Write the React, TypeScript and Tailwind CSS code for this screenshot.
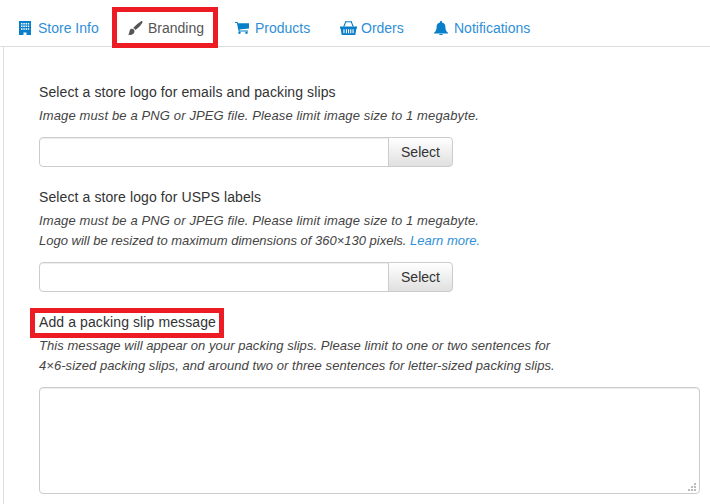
import type { ReactNode } from "react";

function BuildingIcon() {
  return (
    <svg width="12" height="14" viewBox="0 0 12 14" className="fill-[#0a7fc9]">
      <path
        fillRule="evenodd"
        d="M0 0h12v14H7.5v-2.5h-3V14H0zM2 2v1.5h1.5V2zM4.3 2v1.5h1.5V2zM6.6 2v1.5h1.5V2zM8.9 2v1.5h1.3V2zM2 4.6v1.5h1.5V4.6zM4.3 4.6v1.5h1.5V4.6zM6.6 4.6v1.5h1.5V4.6zM8.9 4.6v1.5h1.3V4.6zM2 7.2v1.5h1.5V7.2zM4.3 7.2v1.5h1.5V7.2zM6.6 7.2v1.5h1.5V7.2zM8.9 7.2v1.5h1.3V7.2z"
      />
    </svg>
  );
}

function BrushIcon() {
  return (
    <svg width="15" height="14" viewBox="0 0 15 14" className="fill-[#555]">
      <path d="M13.2 0.2c.7-.4 1.6.3 1.3 1.1C13.8 3.2 10.5 7.4 7.2 9 6.8 8 6.2 7.3 5.2 6.9 7.5 4.3 11 1.4 13.2.2z" />
      <path d="M3.6 7.8c1.6-.2 3 1 2.9 2.7-.1 2.4-2.5 3.4-4.2 3.4-1 0-1.8-.2-2.3-.6 1-.5 1.2-1.1 1.3-2.1.2-1.8 1-3.2 2.3-3.4z" />
    </svg>
  );
}

function CartIcon() {
  return (
    <svg width="14" height="12" viewBox="0 0 14 12" className="fill-[#0a7fc9]">
      <path d="M0 0h2.6l.4 1.2H14v5.4l-9.6 1 .2.9H13v1H3.6L1.9 1H0z" />
      <circle cx="4.5" cy="10.8" r="1.2" />
      <circle cx="11.5" cy="10.8" r="1.2" />
    </svg>
  );
}

function BasketIcon() {
  return (
    <svg width="17" height="14" viewBox="0 0 17 14" className="fill-[#0a7fc9]">
      <path d="M3.2 5.5 5.3 0.4l1 .4L4.5 5.5zM13.8 5.5 11.7 0.4l-1 .4 1.8 4.7z" />
      <path d="M5 0.3h7v1H5z" />
      <path
        fillRule="evenodd"
        d="M0 5.5h17v2h-.6L15.3 14H1.7L.6 7.5H0zM3.4 8.3v4h1.1v-4zM5.9 8.3v4H7v-4zM8 8.3v4h1.1v-4zM10.2 8.3v4h1.1v-4zM12.5 8.3v4h1.1v-4z"
      />
    </svg>
  );
}

function BellIcon() {
  return (
    <svg width="14" height="14" viewBox="0 0 14 14" className="fill-[#0a7fc9]">
      <path d="M7 0c.6 0 1 .4 1 1v.6c2.2.4 3.4 2.200 3.400 4.400 0 3 .9 4.300 2.600 5.800v.7H0v-.7C1.700 10.300 2.600 9 2.600 6 2.600 3.800 3.800 2 6 1.600V1c0-.6.4-1 1-1z" />
      <path d="M5 13h4c0 .6-.9 1-2 1s-2-.4-2-1z" />
    </svg>
  );
}

const tabs: { label: string; icon: ReactNode; active?: boolean; tabWidth: string; iconSlot: string }[] = [
  { label: "Store Info", icon: <BuildingIcon />, tabWidth: "w-[109px]", iconSlot: "w-[19px]" },
  { label: "Branding", icon: <BrushIcon />, active: true, tabWidth: "w-[107px]", iconSlot: "w-[20px]" },
  { label: "Products", icon: <CartIcon />, tabWidth: "w-[105px]", iconSlot: "w-[20px]" },
  { label: "Orders", icon: <BasketIcon />, tabWidth: "w-[94px]", iconSlot: "w-[21px]" },
  { label: "Notifications", icon: <BellIcon />, tabWidth: "w-[130px]", iconSlot: "w-[20px]" },
];

function FileRow() {
  return (
    <div className="flex h-[30px] w-[414px]">
      <div className="w-[350px] rounded-l-[4px] border border-[#ccc] bg-white shadow-[inset_0_1px_1px_rgba(0,0,0,0.075)]" />
      <button className="-ml-px w-[65px] rounded-r-[4px] border border-[#ccc] bg-gradient-to-b from-white to-[#e0e0e0] text-[14px] text-[#333]">
        Select
      </button>
    </div>
  );
}

const titleClass = "text-[14px] leading-[16px] tracking-[0.1px]";
const helpClass = "mt-[6px] text-[13px] italic leading-[20px] text-[#444]";

export default function App() {
  return (
    <div className="relative h-[504px] w-[710px] overflow-hidden bg-white font-['Liberation_Sans',Arial,sans-serif] text-[#333]">
      {/* Tabs */}
      <div className="flex h-[47px] items-end border-b border-[#ddd] pl-[7px]">
        {tabs.map((tab) => (
          <div key={tab.label} className={`flex h-[36px] items-center pl-[12px] text-[14px] ${tab.tabWidth}`}>
            <span className={`flex shrink-0 ${tab.iconSlot}`}>{tab.icon}</span>
            <span className={tab.active ? "text-[#555]" : "text-[#2f8fd8]"}>{tab.label}</span>
          </div>
        ))}
      </div>

      {/* Panel */}
      <div className="ml-[3px] h-[457px] border-l border-[#ddd] pl-[35px] pt-[37px]">
        <p className={titleClass}>Select a store logo for emails and packing slips</p>
        <p className={`${helpClass} tracking-[0.13px]`}>
          Image must be a PNG or JPEG file. Please limit image size to 1 megabyte.
        </p>
        <div className="mt-[11px]">
          <FileRow />
        </div>

        <p className={`mt-[22px] ${titleClass}`}>Select a store logo for USPS labels</p>
        <p className={helpClass}>
          <span className="tracking-[0.13px]">Image must be a PNG or JPEG file. Please limit image size to 1 megabyte.</span>
          <br />
          Logo will be resized to maximum dimensions of 360×130 pixels. <span className="text-[#2f8fd8]">Learn more.</span>
        </p>
        <div className="mt-[11px]">
          <FileRow />
        </div>

        <p className={`mt-[22px] ${titleClass}`}>Add a packing slip message</p>
        <p className={`${helpClass} tracking-[0.06px]`}>
          This message will appear on your packing slips. Please limit to one or two sentences for
          <br />
          4×6-sized packing slips, and around two or three sentences for letter-sized packing slips.
        </p>
        <div className="relative mt-[11px] h-[107px] w-[661px]">
          <textarea className="block h-full w-full resize-none rounded-[4px] border border-[#ccc] bg-white shadow-[inset_0_1px_1px_rgba(0,0,0,0.075)]" />
          {/* Resize grip */}
          <svg width="9" height="9" viewBox="0 0 9 9" className="absolute bottom-[2px] right-[3px] fill-[#bbb]">
            <rect x="6" y="0" width="2" height="2" />
            <rect x="3" y="3" width="2" height="2" />
            <rect x="6" y="3" width="2" height="2" />
            <rect x="0" y="6" width="2" height="2" />
            <rect x="3" y="6" width="2" height="2" />
            <rect x="6" y="6" width="2" height="2" />
          </svg>
        </div>
      </div>

      {/* Red annotation boxes */}
      <div className="absolute left-[112px] top-[7px] h-[41px] w-[106px] border-[5px] border-[#ed1c24]" />
      <div className="absolute left-[30px] top-[308px] h-[30px] w-[194px] border-[5px] border-[#ed1c24]" />
    </div>
  );
}
